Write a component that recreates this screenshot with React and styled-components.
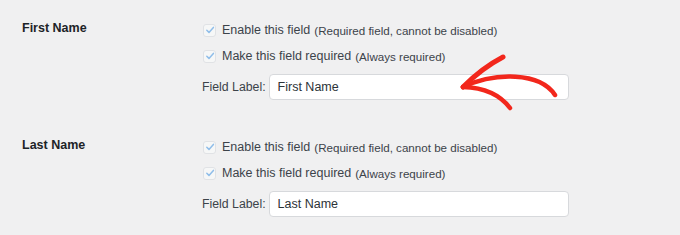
import styled, { createGlobalStyle } from 'styled-components';

const GlobalStyle = createGlobalStyle`
	body {
		margin: 0;
		background: #f0f0f1;
		font-family: 'Liberation Sans', Arial, sans-serif;
		color: #3c434a;
	}
`;

const fields = [
	{ title: 'First Name', value: 'First Name' },
	{ title: 'Last Name', value: 'Last Name' },
];

const Page = styled.div`
	position: relative;
	width: 680px;
	height: 235px;
	padding-top: 17px;
	box-sizing: border-box;
	overflow: hidden;
`;

const Section = styled.div`
	display: grid;
	grid-template-columns: 202px 1fr;
	margin-bottom: 34px;
`;

const Heading = styled.h3`
	margin: 0;
	padding-left: 22px;
	font-size: 12.5px;
	font-weight: 700;
	line-height: 23px;
	color: #1d2327;
`;

const Options = styled.div`
	display: flex;
	flex-direction: column;
`;

const OptionRow = styled.label`
	display: flex;
	align-items: center;
	height: 26px;
	font-size: 12.5px;
	color: #3c434a;

	small {
		margin-left: 4px;
		font-size: 11.6px;
	}
`;

const Check = styled.span`
	display: inline-flex;
	align-items: center;
	justify-content: center;
	width: 11px;
	height: 11px;
	margin-left: 1px;
	margin-right: 6px;
	border: 1px solid #e0e2e5;
	border-radius: 3px;
	background: #f6f7f7;

	svg {
		width: 10px;
		height: 10px;
	}
`;

const LabelRow = styled.div`
	display: flex;
	align-items: center;
	margin-top: 5px;
	font-size: 12.3px;
	gap: 3px;
`;

const TextInput = styled.div`
	display: flex;
	align-items: center;
	width: 300px;
	height: 26px;
	padding: 0 8px;
	box-sizing: border-box;
	background: #fff;
	border: 1px solid #d7d9dc;
	border-radius: 4px;
	font-size: 12.5px;
	color: #2c3338;
`;

const Arrow = styled.svg`
	position: absolute;
	left: 0;
	top: 0;
	pointer-events: none;
`;

const Checkbox = () => (
	<Check>
		<svg viewBox="0 0 10 10">
			<path d="M1.8 5.2 L4 7.4 L8.4 2.4" fill="none" stroke="#8fbde9" strokeWidth="1.5" strokeLinecap="round" strokeLinejoin="round" />
		</svg>
	</Check>
);

export default function App() {
	return (
		<Page>
			<GlobalStyle />
			{fields.map(({ title, value }) => (
				<Section key={title}>
					<Heading>{title}</Heading>
					<Options>
						<OptionRow>
							<Checkbox />
							Enable this field<small>(Required field, cannot be disabled)</small>
						</OptionRow>
						<OptionRow>
							<Checkbox />
							Make this field required<small>(Always required)</small>
						</OptionRow>
						<LabelRow>
							Field Label:
							<TextInput>{value}</TextInput>
						</LabelRow>
					</Options>
				</Section>
			))}
			<Arrow width="680" height="235" viewBox="0 0 680 235">
				<g fill="none" stroke="#f2271c" strokeLinecap="round" strokeLinejoin="round">
					<path d="M463 87 C495 72, 540 72, 555 95" strokeWidth="4.5" />
					<path d="M463 87 Q482 68, 503 57" strokeWidth="5" />
					<path d="M463 87 Q495 88, 510 108" strokeWidth="4.5" />
				</g>
			</Arrow>
		</Page>
	);
}
